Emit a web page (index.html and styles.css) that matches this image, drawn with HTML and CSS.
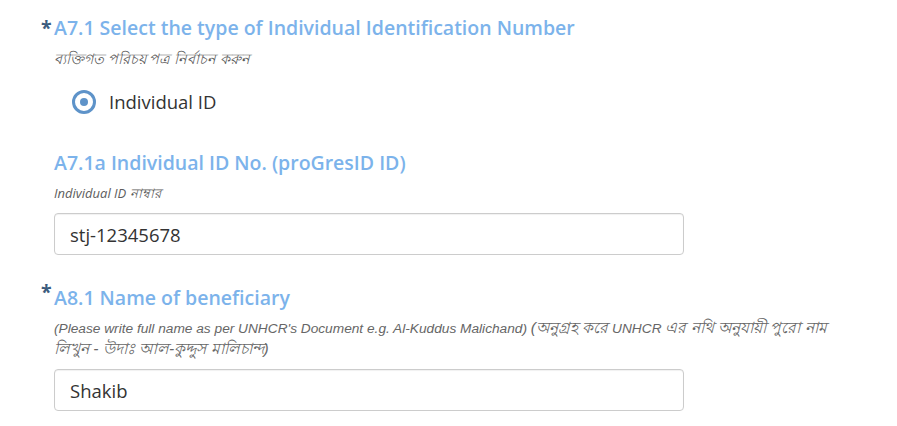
FILE: index.html
```html
<!DOCTYPE html>
<html>
<head>
<meta charset="utf-8">
<link rel="stylesheet" href="styles.css">
</head>
<body>
<div class="form">
  <div class="question q1">
    <h2 class="label"><span class="req">*</span>A7.1 Select the type of Individual Identification Number</h2>
    <p class="hint hint-bn">ব্যক্তিগত পরিচয় পত্র নির্বাচন করুন</p>
    <div class="radio-row">
      <span class="radio"><span class="dot"></span></span>
      <span class="radio-label">Individual ID</span>
    </div>
  </div>
  <div class="question q2">
    <h2 class="label">A7.1a Individual ID No. (proGresID ID)</h2>
    <p class="hint">Individual ID নাম্বার</p>
    <div class="input">stj-12345678</div>
  </div>
  <div class="question q3">
    <h2 class="label"><span class="req raised">*</span>A8.1 Name of beneficiary</h2>
    <p class="hint hint-long"><span>(Please write full name as per UNHCR's Document e.g. Al-Kuddus Malichand)</span> <span class="bn">(অনুগ্রহ করে</span> <span>UNHCR</span> <span class="bn">এর নথি অনুযায়ী পুরো নাম</span> <span class="bn">লিখুন - উদাঃ আল-কুদ্দুস মালিচান্দ)</span></p>
    <div class="input">Shakib</div>
  </div>
</div>
</body>
</html>
```
FILE: styles.css
```css
html, body { margin: 0; padding: 0; background: #fff; }
body { font-family: "Open Sans", "Noto Sans", sans-serif; color: #333; }
.form { padding: 14px 0 0 54px; width: 792px; }
.label {
  position: relative;
  margin: 0;
  font-size: 19.5px;
  font-weight: 600;
  color: #7cb3eb;
  line-height: 28px;
}
.req {
  position: absolute;
  left: -13px;
  top: 0;
  color: #3c5c7e;
  font-weight: 700;
}
.req.raised { top: -6px; }
.hint {
  margin: 7px 0 0 0;
  font-size: 13px;
  font-style: italic;
  color: #5c5c5c;
  line-height: 20px;
}
.hint-bn { font-size: 14.4px; }
.hint-long {
  font-family: "Liberation Sans", "Open Sans", sans-serif;
  font-size: 13.7px;
  margin-top: 6px;
  color: #666;
}
.hint-long .bn { font-size: 15.5px; }
.radio-row { display: flex; align-items: center; margin: 20px 0 0 18px; }
.radio {
  width: 18px; height: 18px;
  border: 3px solid #5e93c9;
  border-radius: 50%;
  display: flex; align-items: center; justify-content: center;
}
.dot { width: 8px; height: 8px; border-radius: 50%; background: #5e93c9; }
.radio-label { margin-left: 13px; font-size: 18.5px; color: #333; }
.q2 { margin-top: 35px; }
.q2 .hint { margin-top: 6px; }
.input {
  margin-top: 10px;
  width: 630px;
  height: 42px;
  border: 1px solid #ccc;
  border-radius: 4px;
  box-shadow: inset 0 1px 1px rgba(0,0,0,0.06);
  box-sizing: border-box;
  display: flex; align-items: center;
  padding-left: 15px;
  font-size: 18.5px;
  color: #333;
}
.q3 { margin-top: 29px; }
.q3 .input { margin-top: 9px; }
```
